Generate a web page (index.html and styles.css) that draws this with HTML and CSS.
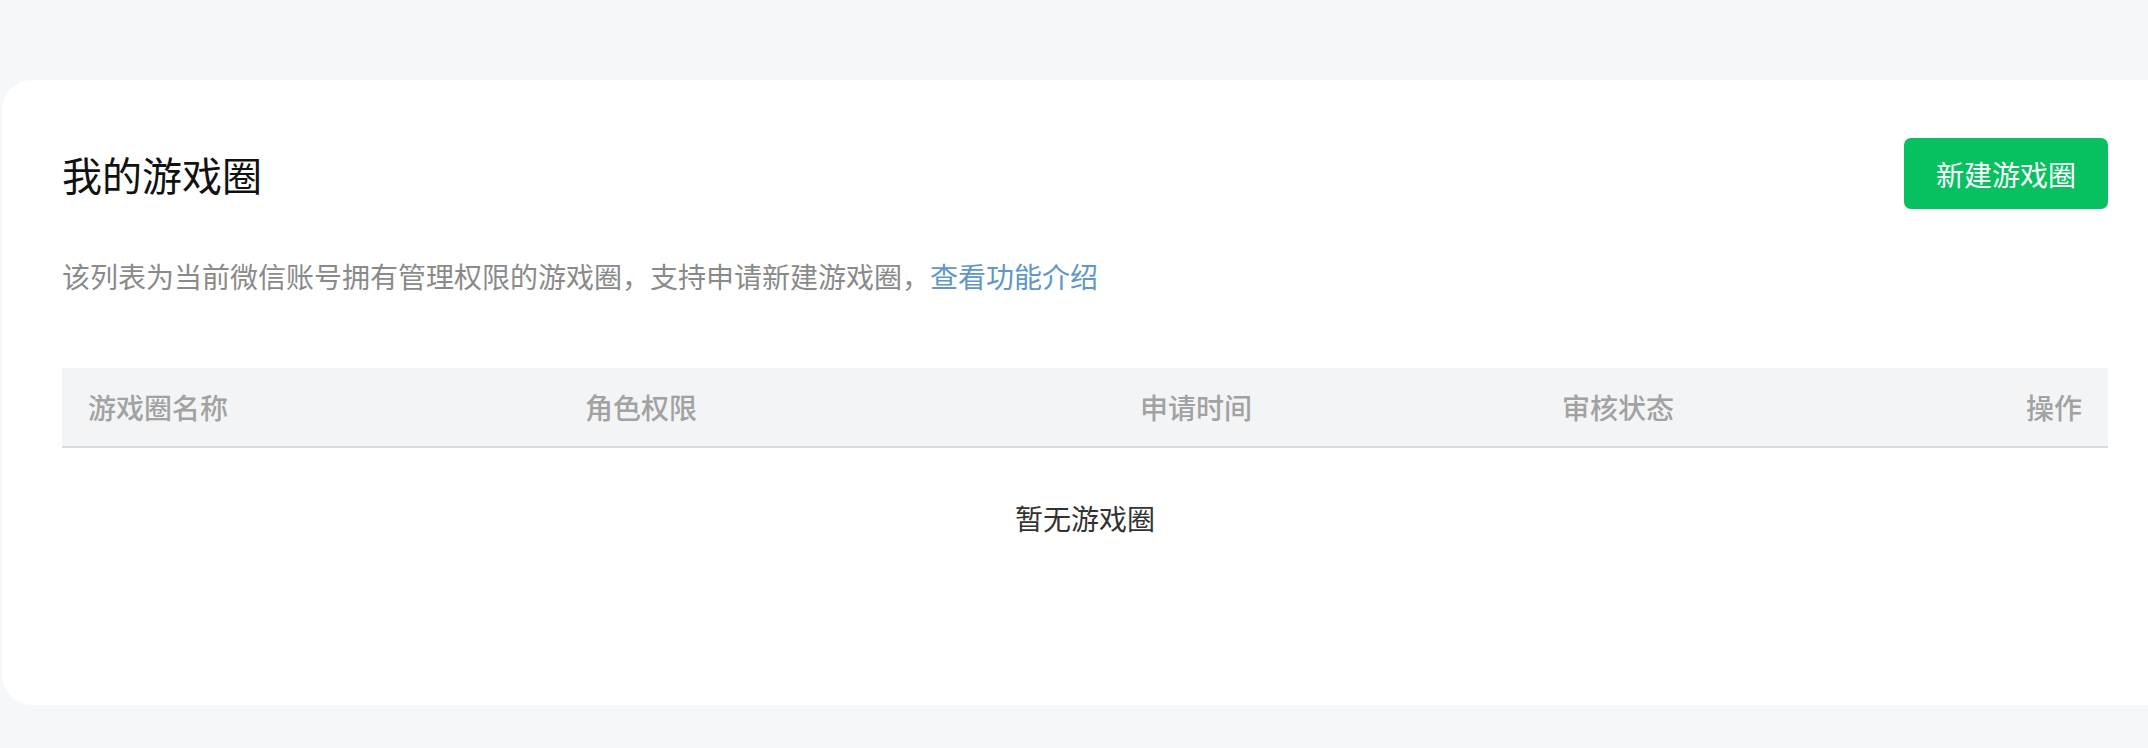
FILE: index.html
```html
<!DOCTYPE html>
<html lang="zh-CN">
<head>
<meta charset="utf-8">
<title>我的游戏圈</title>
<link rel="stylesheet" href="styles.css">
</head>
<body>
<div class="page">
  <section class="card">
    <div class="head">
      <h1 class="title">我的游戏圈</h1>
      <button class="btn-primary">新建游戏圈</button>
    </div>
    <p class="desc">该列表为当前微信账号拥有管理权限的游戏圈，支持申请新建游戏圈，<a class="link" href="#">查看功能介绍</a></p>
    <div class="table">
      <div class="thead">
        <div class="th">游戏圈名称</div>
        <div class="th">角色权限</div>
        <div class="th">申请时间</div>
        <div class="th">审核状态</div>
        <div class="th th-right">操作</div>
      </div>
      <div class="empty">暂无游戏圈</div>
    </div>
  </section>
</div>
</body>
</html>
```

FILE: styles.css
```css
html, body {
  margin: 0;
  padding: 0;
}
body {
  background: #f6f7f9;
  font-family: "Noto Sans CJK SC", "Noto Sans", sans-serif;
  overflow: hidden;
  height: 748px;
}
.page {
  padding-top: 80px;
}
.card {
  background: #ffffff;
  margin-left: 2px;
  margin-right: -40px;
  border-radius: 30px;
  padding: 58px 80px 0 60px;
  height: 625px;
  box-sizing: border-box;
}
.head {
  display: flex;
  align-items: center;
  justify-content: space-between;
  height: 71px;
}
.title {
  margin: 0;
  font-size: 40px;
  font-weight: 400;
  color: #111;
  line-height: 52px;
}
.btn-primary {
  width: 204px;
  height: 71px;
  background: #07c160;
  color: #fff;
  border: none;
  border-radius: 7px;
  font-family: inherit;
  font-size: 28px;
  padding: 0;
}
.desc {
  margin: 47px 0 0;
  font-size: 28px;
  line-height: 40px;
  color: #8a8a8a;
}
.link {
  color: #5f97c8;
  text-decoration: none;
}
.table {
  margin-top: 72px;
}
.thead {
  display: grid;
  grid-template-columns: 497px 555px 422px 1fr auto;
  align-items: center;
  height: 78px;
  background: #f3f4f6;
  border-bottom: 2px solid #dcdcdc;
  padding: 0 26px;
}
.th {
  font-size: 28px;
  font-weight: 500;
  color: #a2a2a2;
}
.th-right {
  text-align: right;
}
.empty {
  padding-top: 50px;
  text-align: center;
  font-size: 28px;
  line-height: 40px;
  color: #333;
}
```
